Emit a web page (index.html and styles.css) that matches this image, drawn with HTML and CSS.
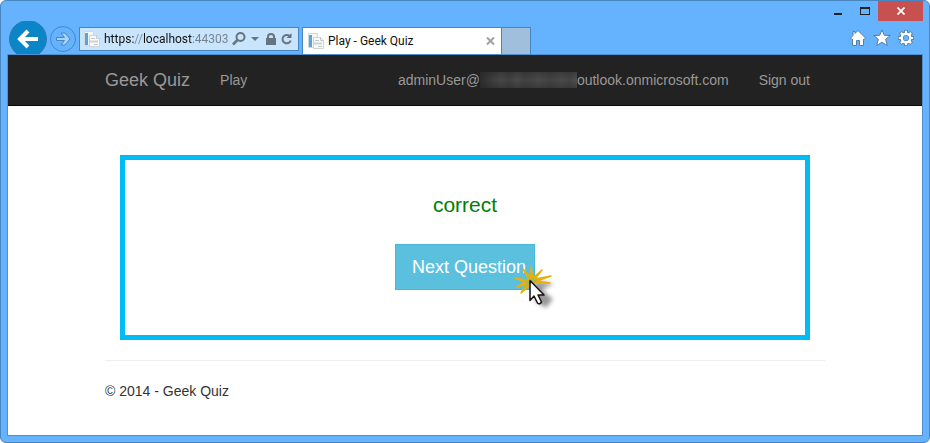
FILE: index.html
```
<!DOCTYPE html>
<html lang="en">
<head>
<meta charset="utf-8">
<title>Play - Geek Quiz</title>
<link rel="stylesheet" href="styles.css">
</head>
<body>
<svg class="defs" aria-hidden="true">
  <symbol id="page-icon" viewBox="0 0 16 16">
    <path d="M.5.5h9v14h-9z" fill="#f3f6f9" stroke="#cfd8e0"/>
    <path d="M1 2h3v12H1z" fill="#5fa3d3"/>
    <path d="M5.500 4.500h7l3 3v8h-10z" fill="#f8f9fa" stroke="#cfd4d9"/>
    <path d="M12.500 4.500v3h3M7 7.500h4M10 13.500h4" fill="none" stroke="#c2c8ce"/>
    <path d="M6 10.500h8" stroke="#ccd2d8" stroke-width="2"/>
  </symbol>
</svg>
<div class="window">
  <header class="chrome">
    <div class="titlebar">
      <button class="caption" aria-label="Minimize"><svg width="10" height="10" viewBox="0 0 10 10"><path d="M1 8h8" stroke="#222" stroke-width="2"/></svg></button>
      <button class="caption" aria-label="Maximize"><svg width="10" height="8" viewBox="0 0 10 8"><path d="M.5 0v8M9.500 0v8M0 7.500h10" fill="none" stroke="#222"/><path d="M0 1h10" stroke="#222" stroke-width="2"/></svg></button>
      <button class="caption close" aria-label="Close"><svg width="8" height="8" viewBox="0 0 8 8"><path d="M.5 .5l7 7M7.500 .5l-7 7" stroke="#fff" stroke-width="1.700"/></svg></button>
    </div>
    <div class="toolbar">
      <button class="back" aria-label="Back"><svg width="38" height="38" viewBox="0 0 38 38"><circle cx="19" cy="19" r="18.500" fill="#0a85c7" stroke="#3a79ad"/><path d="M29 19H12M19 11l-8 8 8 8" fill="none" stroke="#fff" stroke-width="4"/></svg></button>
      <button class="forward" aria-label="Forward"><svg width="26" height="26" viewBox="0 0 26 26"><circle cx="13" cy="13" r="12.500" fill="none" stroke="#4787c2"/><path d="M6.500 11.500h8l-3.500-4.500h4l5 6-5 6h-4l3.500-4.500h-8z" fill="#a9d5fb" stroke="#4787c2"/></svg></button>
      <form class="address">
        <svg width="16" height="16"><use href="#page-icon"/></svg>
        <input class="url" type="text" aria-label="Address" value="https://localhost:44303/">
        <button type="button" class="tool" aria-label="Search"><svg width="14" height="14" viewBox="0 0 14 14"><circle cx="8.500" cy="5" r="4" fill="none" stroke="#66747f" stroke-width="2"/><path d="M5.500 8L1 12.500" stroke="#66747f" stroke-width="2.500"/></svg></button>
        <button type="button" class="tool drop" aria-label="Show address list"><svg width="8" height="4" viewBox="0 0 8 4"><path d="M0 0h8L4 4z" fill="#66747f"/></svg></button>
        <button type="button" class="tool" aria-label="Security report"><svg width="10" height="12" viewBox="0 0 10 12"><path d="M0 5h10v7H0z" fill="#66747f"/><path d="M2 6V3.500a3 2.500 0 0 1 6 0V6" fill="none" stroke="#66747f" stroke-width="2"/></svg></button>
        <button type="button" class="tool" aria-label="Refresh"><svg width="12" height="12" viewBox="0 0 12 12"><path d="M8.500 3A4.200 4.200 0 1 0 9.700 7.500" fill="none" stroke="#66747f" stroke-width="2"/><path d="M10.500 0v5h-5z" fill="#66747f"/></svg></button>
      </form>
      <div class="tab">
        <svg width="16" height="16"><use href="#page-icon"/></svg>
        <span class="tab-title">Play - Geek Quiz</span>
        <button class="tab-close" aria-label="Close tab"><svg width="9" height="8" viewBox="0 0 9 8"><path d="M1 .5l7 7M8 .5l-7 7" stroke="#a0a0a0" stroke-width="2"/></svg></button>
      </div>
      <button class="new-tab" aria-label="New tab"></button>
      <div class="commands">
        <button aria-label="Home"><svg width="16" height="16" viewBox="0 0 16 16"><path d="M8 .5L15.500 8l-1.500 1.500-.5-.5v6.500H9.500v-5h-3v5H2.500V9l-.5.5L.5 8 3 5.500V1.500h2v2z" fill="#fff" stroke="#527fa9"/></svg></button>
        <button aria-label="Favorites"><svg width="18" height="18" viewBox="0 0 18 18"><path d="M9 .8l2.300 5.500 6 .2-4.700 3.900 1.800 6.100L9 13.300l-5.400 3.200 1.800-6.100L.7 6.500l6-.2z" fill="#fff" stroke="#527fa9"/></svg></button>
        <button aria-label="Tools"><svg width="16" height="16" viewBox="0 0 16 16"><g fill="none" stroke="#527fa9"><circle cx="8" cy="8" r="4.500" stroke-width="4"/><path d="M8 0v4M8 12v4M0 8h4M12 8h4M2.300 2.300l3 3M10.700 10.700l3 3M13.700 2.300l-3 3M5.300 10.700l-3 3" stroke-width="4"/></g><g fill="none" stroke="#fff"><circle cx="8" cy="8" r="4.300" stroke-width="2.400"/><path d="M8 .8v3M8 12.200v3M.8 8h3M12.200 8h3M2.900 2.900l2 2M11.100 11.100l2 2M13.100 2.900l-2 2M4.900 11.100l-2 2" stroke-width="2.200"/></g></svg></button>
      </div>
    </div>
  </header>
  <div class="page">
    <nav class="navbar">
      <div class="container nav-row">
        <a class="brand" href="#">Geek Quiz</a>
        <a href="#">Play</a>
        <a class="account" href="#">adminUser@<span class="redacted"></span>outlook.onmicrosoft.com</a>
        <a href="#">Sign out</a>
      </div>
    </nav>
    <main class="container">
      <section class="quiz">
        <p class="result">correct</p>
        <div class="action">
          <button class="next">Next Question</button>
          <svg class="pointer" width="44" height="54" viewBox="0 0 44 54" aria-hidden="true">
            <defs><filter id="soft" x="-50%" y="-50%" width="200%" height="200%"><feGaussianBlur stdDeviation="2"/></filter></defs>
            <path d="M20 17l20 3-12 5 7 7 4 3-7 9-5-3-6-4z" fill="#000" opacity=".4" filter="url(#soft)"/>
            <path d="M15 16L9 5l8 9V3l2 11 9-8-7 9 16-3-14 5 13 2-14 0-5 0-5 6-5 4 5-9-9 3 8-5-10-4 10 2z" fill="#a3b956" stroke="#e8b00c" stroke-width="1.500" stroke-linejoin="round"/>
            <path d="M16 36.500v-20L30 31h-6l3.500 7q-2 3-4 1l-3.500-7z" fill="#fff" stroke="#151515" stroke-width="1.500" stroke-linejoin="round"/>
          </svg>
        </div>
      </section>
      <footer class="footer">© 2014 - Geek Quiz</footer>
    </main>
  </div>
</div>
</body>
</html>
```
FILE: styles.css
```
* { box-sizing: border-box; }
body { margin: 0; background: #fff; font: 14px/20px "Liberation Sans", Arial, sans-serif; color: #333; }
button { margin: 0; padding: 0; border: 0; background: none; font: inherit; }
svg { display: block; flex: none; }
.defs { position: absolute; width: 0; height: 0; }

.window {
  display: flex;
  flex-direction: column;
  min-height: 100vh;
  padding: 0 6px 6px;
  border: 1px solid #4986c0;
  border-radius: 6px;
  background: #65b2fe;
}

.chrome { font: 12px/16px Roboto, "Noto Sans", sans-serif; color: #111; }
.titlebar { display: flex; justify-content: flex-end; height: 20px; }
.caption { display: flex; align-items: center; justify-content: center; width: 27px; }
.caption.close { width: 45px; background: #c75050; }

.toolbar { display: flex; height: 33px; overflow: hidden; padding: 0 1px 0 2px; }
.back { align-self: flex-start; height: 33px; margin-right: 3px; margin-top: -1px; }
.forward { align-self: flex-start; margin-top: 5px; margin-right: 3px; }
.address {
  display: flex;
  align-items: center;
  width: 220px;
  height: 24px;
  margin: 6px 3px 0 0;
  padding: 0 5px 0 4px;
  border: 1px solid #4585c0;
  background: #c9e4fd;
}
.url {
  flex: 1;
  min-width: 0;
  height: 22px;
  margin: 0 4px;
  padding: 0;
  border: 0;
  outline: 0;
  font: inherit;
  color: transparent;
  background: linear-gradient(to right, #111 0 30px, #7d8b97 30px 40px, #111 40px 88px, #74818d 88px);
  -webkit-background-clip: text;
  background-clip: text;
}
.tool { margin-right: 5px; }
.tool:last-child { margin-right: 0; }
.drop { margin-right: 7px; }

.tab {
  display: flex;
  align-items: center;
  width: 200px;
  margin-top: 6px;
  padding: 0 6px 0 5px;
  border: 1px solid #4585c0;
  border-bottom: 0;
  background: #fff;
}
.tab-title { flex: 1; margin-left: 4px; white-space: nowrap; }
.new-tab { width: 29px; margin-top: 6px; border: 1px solid #4585c0; border-width: 1px 1px 0 0; background: #9fbfdd; }
.commands { display: flex; align-items: center; gap: 7px; margin: 0 8px 0 auto; }

.page { flex: 1; border: 1px solid #4f91d0; background: #fff; }
.navbar { border-bottom: 1px solid #080808; background: #222; }
.container { max-width: 750px; margin: 0 auto; padding: 0 15px; }
.nav-row { display: flex; align-items: center; gap: 30px; height: 50px; padding-right: 30px; }
.nav-row a { color: #999; text-decoration: none; white-space: nowrap; }
.nav-row .brand { font-size: 18px; }
.account { display: flex; align-items: center; margin-left: auto; }
.redacted {
  width: 97px;
  height: 16px;
  background:
    linear-gradient(#2226, transparent 50%, #2226),
    linear-gradient(90deg, #2c2c2c, #3c3c3c 12%, #484848 22%, #404040 30%, #4a4a4a 38%, #414141 46%, #4b4b4b 60%, #424242 72%, #4b4b4b 84%, #444 92%, #505050);
}

.quiz { margin: 49px 15px 20px; padding: 35px 20px 45px; border: 5px solid #00bcf2; text-align: center; }
.result { margin: 0 0 29px; font-size: 21px; line-height: 20px; color: #008000; }
.action { position: relative; width: 140px; margin: 0 auto; }
.next {
  width: 140px;
  height: 46px;
  padding: 0 16px;
  border: 1px solid #46b8da;
  background: #5bc0de;
  color: #fff;
  font-size: 18px;
  text-align: left;
  white-space: nowrap;
}
.pointer { position: absolute; left: 119px; top: 20px; }
.footer { padding: 20px 0 34px; border-top: 1px solid #eee; }
```
